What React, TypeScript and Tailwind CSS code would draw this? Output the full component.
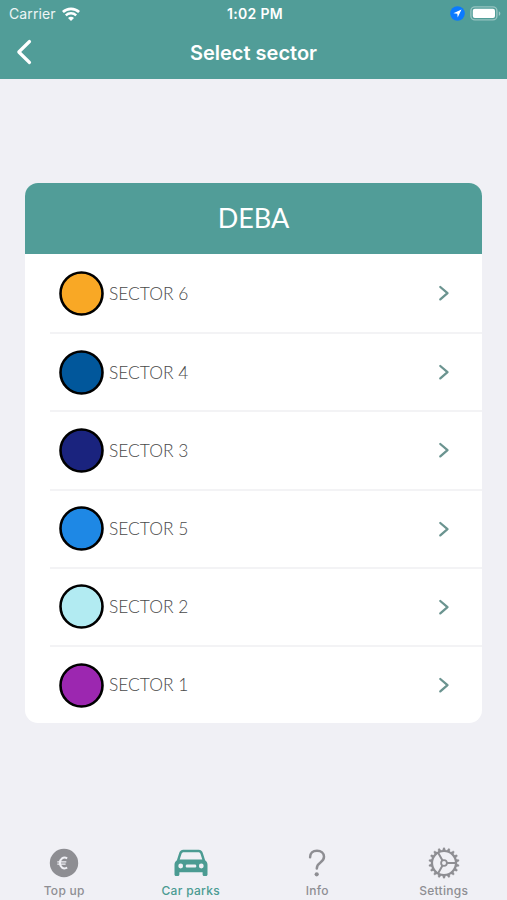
import * as React from "react";

const sectors = [
  { name: "SECTOR 6", color: "#f9a825" },
  { name: "SECTOR 4", color: "#01579b" },
  { name: "SECTOR 3", color: "#1a237e" },
  { name: "SECTOR 5", color: "#1e88e5" },
  { name: "SECTOR 2", color: "#b2ebf2" },
  { name: "SECTOR 1", color: "#9c27b0" },
];

function StatusBar() {
  return (
    <div className="grid h-[27px] grid-cols-3 items-center pl-[9px] pr-[6px] text-white">
      <div className="flex items-center gap-[6px]">
        <span className="text-[14px] tracking-[0.1px] text-white/90">Carrier</span>
        <svg width="18" height="14" viewBox="0 0 18 14" fill="none" stroke="currentColor">
          <path d="M.9 5C5.300.7 12.700.7 17.100 5" strokeWidth="2.700" />
          <path d="M3.800 8.400c2.900-2.800 7.500-2.800 10.400 0" strokeWidth="2.400" />
          <path d="m9 14-3-3.100c1.700-1.600 4.300-1.600 6 0Z" fill="currentColor" stroke="none" />
        </svg>
      </div>
      <span className="text-center text-[14px] font-semibold tracking-[0.3px]">1:02 PM</span>
      <div className="flex items-center justify-end gap-[5px]">
        <svg width="15" height="15" viewBox="0 0 15 15">
          <circle cx="7.5" cy="7.5" r="7.3" fill="#0a7aff" />
          <path d="M11.5 3.5 3.4 7.3l3.9.4.4 3.9Z" fill="#fff" />
        </svg>
        <svg width="31" height="15" viewBox="0 0 31 15">
          <rect x=".9" y=".9" width="26" height="13" rx="4" fill="none" stroke="#fff" strokeOpacity=".4" strokeWidth="1.4" />
          <rect x="2.8" y="2.8" width="22.2" height="9.2" rx="2" fill="#fff" />
          <path d="M28.8 5.2c2 .8 2 3.8 0 4.6Z" fill="#fff" fillOpacity=".45" />
        </svg>
      </div>
    </div>
  );
}

function Header() {
  return (
    <header className="h-[79px] bg-[#519d98]">
      <StatusBar />
      <div className="grid h-[50px] grid-cols-[60px_1fr_60px] items-center text-white">
        <svg className="ml-4" width="17" height="26" viewBox="0 0 17 26" fill="none">
          <path d="M13.5 2.500 2.800 13l10.700 10.500" stroke="currentColor" strokeWidth="3.200" strokeLinecap="round" strokeLinejoin="round" />
        </svg>
        <h1 className="pt-px text-center text-[20px] font-semibold">Select sector</h1>
      </div>
    </header>
  );
}

function SectorRow({ name, color, first }: { name: string; color: string; first: boolean }) {
  return (
    <li className="flex h-[78.2px] pl-[25px]">
      <div className={`flex flex-1 items-center pl-[9px] ${first ? "" : "border-t-2 border-[#f3f3f5]"}`}>
        <svg width="45" height="45" viewBox="0 0 45 45">
          <circle cx="22.500" cy="22.500" r="21" fill={color} stroke="#000" strokeWidth="2.600" />
        </svg>
        <span className="ml-[5px] flex-1 pt-px font-['Lato','Open_Sans',sans-serif] text-[17.4px] font-light text-[#4a4a4a]">
          {name}
        </span>
        <svg className="mr-[31px]" width="14" height="18" viewBox="0 0 14 18" fill="none">
          <path d="m3.300 3 7.200 6.200-7.200 6.200" stroke="#6b9490" strokeWidth="2.300" strokeLinecap="round" strokeLinejoin="round" />
        </svg>
      </div>
    </li>
  );
}

function EuroIcon() {
  return (
    <svg width="30" height="30" viewBox="0 0 30 30" fill="none">
      <circle cx="15" cy="15" r="14.200" fill="#8e8e93" />
      <path d="M18.200 10.300c-4-2-7.300.700-7.300 4.700s3.300 6.700 7.300 4.700" stroke="#f0f0f5" strokeWidth="2" />
      <path d="M8.300 13.800h9M8.300 16.200h8.300" stroke="#f0f0f5" strokeWidth="1.200" />
    </svg>
  );
}

function CarIcon() {
  return (
    <svg width="34" height="30" viewBox="0 0 34 30">
      <path
        fill="#4b9b92"
        fillRule="evenodd"
        d="M9.500 1.800h15c2.500 0 3.700 1.200 4.400 3.500l2.200 6.900c1.700 1.200 2.400 2.600 2.400 4.600V26.500c0 .9-.6 1.500-1.500 1.500h-1.900c-.9 0-1.500-.6-1.500-1.500v-2.200H5.400V26.500c0 .9-.6 1.500-1.500 1.500H2c-.9 0-1.500-.6-1.500-1.500V16.800c0-2 .7-3.400 2.400-4.600l2.200-6.900C5.800 3 7 1.800 9.500 1.800ZM10 4.200c-1.500 0-2.200.6-2.600 2L5.700 11.500h22.600l-1.700-5.300c-.4-1.400-1.100-2-2.600-2ZM6.700 15.600a2.400 2.400 0 1 0 0 4.800 2.400 2.400 0 0 0 0-4.800Zm20.600 0a2.400 2.400 0 1 0 0 4.800 2.400 2.400 0 0 0 0-4.800ZM13.300 16.400c-1.100 0-1.600.6-1.600 1.600s.5 1.600 1.600 1.600h7.400c1.100 0 1.600-.6 1.600-1.600s-.5-1.600-1.600-1.600Z"
      />
    </svg>
  );
}

function HelpIcon() {
  return (
    <svg width="30" height="30" viewBox="0 0 30 30" fill="none">
      <path
        d="M8.100 9.200c0-4 2.700-6.500 6.900-6.500s7 2.400 7 6.100c0 2.700-1.500 4.300-3.800 5.900-2.400 1.700-3.400 3-3.400 5.800"
        stroke="#8e8e93"
        strokeWidth="2.500"
        strokeLinecap="round"
      />
      <circle cx="14.700" cy="26.300" r="2.100" fill="#8e8e93" />
    </svg>
  );
}

function GearIcon() {
  const teeth = Array.from({ length: 18 }, (_, i) => i * 20);
  return (
    <svg width="32" height="32" viewBox="0 0 32 32" fill="none" stroke="#8e8e93">
      {teeth.map((angle) => (
        <path key={angle} d="m14.300 3.800 1-3h1.400l1 3Z" fill="#8e8e93" strokeWidth=".3" transform={`rotate(${angle} 16 16)`} />
      ))}
      <circle cx="16" cy="16" r="12" strokeWidth="2.200" />
      <circle cx="16" cy="16" r="2.900" strokeWidth="1.800" />
      <path d="M19 16h9M14.500 13.400 10 5.600M14.500 18.600 10 26.400" strokeWidth="2" />
    </svg>
  );
}

const tabs = [
  { label: "Top up", icon: <EuroIcon /> },
  { label: "Car parks", icon: <CarIcon />, active: true },
  { label: "Info", icon: <HelpIcon /> },
  { label: "Settings", icon: <GearIcon /> },
];

function TabBar() {
  return (
    <nav className="grid h-[54px] grid-cols-4 pl-px">
      {tabs.map((tab) => (
        <div
          key={tab.label}
          className={`flex flex-col items-center ${tab.active ? "text-[#4b9b92]" : "text-[#8e8e93]"}`}
        >
          <div className="flex h-[34px] items-center">{tab.icon}</div>
          <span className="mt-[3px] text-[12px] leading-[16px] font-medium tracking-[0.3px]">{tab.label}</span>
        </div>
      ))}
    </nav>
  );
}

export default function App() {
  return (
    <div className="flex h-[900px] w-[507px] flex-col overflow-hidden bg-[#f0f0f5] font-['Inter','Liberation_Sans',sans-serif]">
      <Header />
      <main className="flex-1 px-[25px] pt-[104px]">
        <section className="overflow-hidden rounded-[13px] bg-white">
          <h2 className="flex h-[71px] items-center justify-center bg-[#519d98] font-['Lato','Open_Sans',sans-serif] text-[27px] text-white">
            DEBA
          </h2>
          <ul>
            {sectors.map((sector, i) => (
              <SectorRow key={sector.name} name={sector.name} color={sector.color} first={i === 0} />
            ))}
          </ul>
        </section>
      </main>
      <TabBar />
    </div>
  );
}
